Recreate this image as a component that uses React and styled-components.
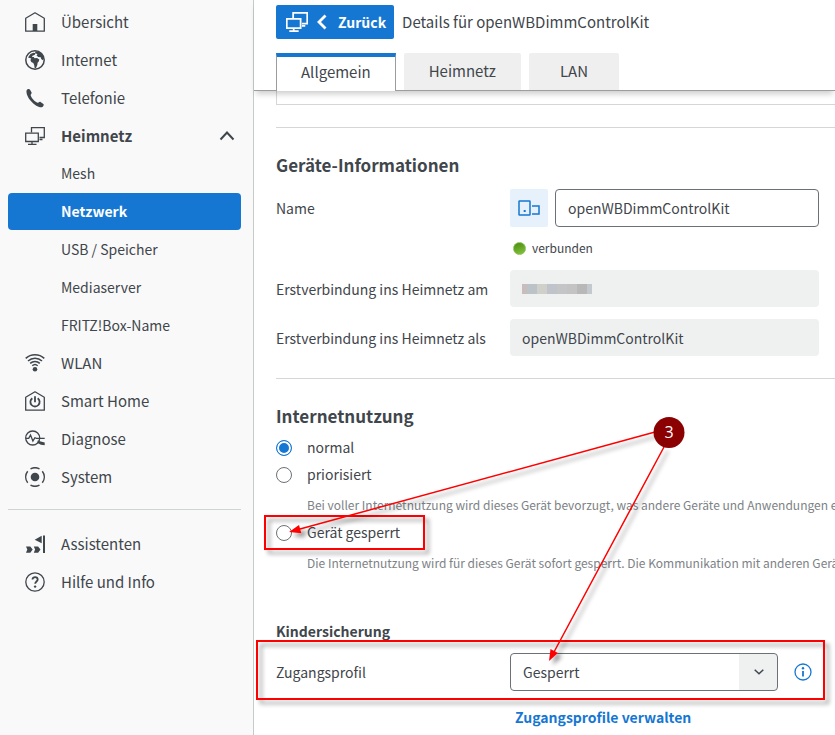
import React, { useState } from 'react';
import styled, { createGlobalStyle } from 'styled-components';

const BLUE = '#1677d2';
const TEXT = '#3f464c';

const GlobalStyle = createGlobalStyle`
    * {
        box-sizing: border-box;
    }

    body {
        margin: 0;
        background: #fff;
        color: ${TEXT};
        font-family: 'Noto Sans CJK SC', 'Noto Sans', sans-serif;
        font-size: 14px;
        line-height: 20px;
    }

    button, input, select {
        font: inherit;
        color: inherit;
    }
`;

const Page = styled.div`
    position: relative;
    display: flex;
    min-height: 100vh;
    overflow: hidden;
`;

// Sidebar

const Sidebar = styled.nav`
    flex: 0 0 254px;
    padding: 3px 12px 0 8px;
    background: #f9f9f9;
    border-right: 1px solid #c8caca;
`;

const MenuList = styled.ul`
    list-style: none;
    margin: 0;
    padding: 0;
`;

const SubList = styled(MenuList)`
    display: flex;
    flex-direction: column;
    gap: 1px;
`;

const MenuLink = styled.a`
    display: flex;
    align-items: center;
    gap: 16px;
    height: 38px;
    padding: 0 6px 0 17px;
    color: ${TEXT};
    font-size: 15px;
    font-weight: ${(props) => (props.$open ? 'bold' : 'normal')};
    text-decoration: none;
`;

const MenuText = styled.span`
    flex: 1;
`;

const SubLink = styled.a`
    display: flex;
    align-items: center;
    height: 37px;
    padding: 0 0 2px 53px;
    border-radius: 4px;
    background: ${(props) => (props.$active ? BLUE : 'transparent')};
    color: ${(props) => (props.$active ? '#fff' : TEXT)};
    font-weight: ${(props) => (props.$active ? 'bold' : 'normal')};
    text-decoration: none;
`;

const MenuDivider = styled.hr`
    height: 1px;
    margin: 13px 0 15px;
    border: 0;
    background: #d0d3d3;
`;

// Header

const Main = styled.main`
    flex: 1;
    min-width: 0;
`;

const Header = styled.header`
    position: relative;
    padding: 5px 0 0 22px;
    border-bottom: 1px solid #9b9e9c;
    box-shadow: 0 5px 6px -2px rgba(0, 0, 0, 0.2);
`;

const TitleRow = styled.div`
    display: flex;
    align-items: center;
    gap: 8px;
`;

const BackButton = styled.button`
    display: flex;
    align-items: center;
    gap: 8px;
    height: 34px;
    padding: 0 8px 0 10px;
    border: 0;
    border-radius: 2px;
    background: ${BLUE};
    color: #fff;
    font-size: 14px;
    font-weight: bold;
`;

const Title = styled.h1`
    margin: 0;
    font-size: 15px;
    font-weight: normal;
`;

const Tabs = styled.div`
    display: flex;
    gap: 8px;
    margin-top: 14px;
`;

const Tab = styled.button`
    min-width: 90px;
    height: ${(props) => (props.$active ? '38px' : '37px')};
    margin-bottom: ${(props) => (props.$active ? '-1px' : '0')};
    padding: ${(props) => (props.$active ? '0 24px 5px' : '0 25px 1px')};
    border: ${(props) => (props.$active ? '1px solid #9b9e9c' : '0')};
    border-top: ${(props) => (props.$active ? `4px solid ${BLUE}` : '0')};
    border-bottom: 0;
    border-radius: ${(props) => (props.$active ? '0' : '2px 2px 0 0')};
    background: ${(props) => (props.$active ? '#fff' : '#efefef')};
    font-size: 15px;
`;

// Content

const Content = styled.div`
    padding-left: 22px;
`;

const BoxEnd = styled.div`
    height: 14px;
    border: 1px solid #d4d7d6;
    border-width: 0 0 1px 1px;
`;

const Section = styled.section`
    margin-top: 22px;
    padding-top: 25px;
    border-top: 1px solid #d4d7d6;
`;

const SectionTitle = styled.h2`
    margin: 0;
    font-size: 17px;
    font-weight: bold;
    line-height: 24px;
`;

const Row = styled.div`
    display: grid;
    grid-template-columns: 234px minmax(0, 309px);
    align-items: center;
    margin-top: 12px;
`;

const NameField = styled.div`
    display: flex;
    gap: 7px;
`;

const DeviceIcon = styled.div`
    display: flex;
    align-items: center;
    justify-content: center;
    flex: 0 0 38px;
    height: 38px;
    border-radius: 2px;
    background: #e6f1fb;
`;

const TextInput = styled.input`
    width: 100%;
    min-width: 0;
    height: ${(props) => (props.readOnly ? '37px' : '38px')};
    padding: 0 12px;
    border: ${(props) => (props.readOnly ? '0' : '1px solid #6b7176')};
    border-radius: 4px;
    background: ${(props) => (props.readOnly ? '#eff1f1' : '#fff')};
    outline: 0;
`;

const HiddenValue = styled.div`
    display: flex;
    align-items: center;
    height: 37px;
    padding: 0 12px;
    border-radius: 4px;
    background: #eff1f1;
`;

const Block = styled.span`
    width: ${(props) => (props.$half ? '5px' : '10px')};
    height: 10px;
    background: ${(props) => props.$color};
`;

const Status = styled.div`
    display: flex;
    align-items: center;
    gap: 6px;
    margin: 11px 0 0 237px;
    font-size: 12px;
`;

const Led = styled.span`
    width: 13px;
    height: 13px;
    border: 1px solid #8cbf55;
    border-radius: 50%;
    background: linear-gradient(160deg, #4a8a12, #85c63c);
`;

const RadioGroup = styled.div`
    margin-top: 5px;
`;

const RadioRow = styled.label`
    display: flex;
    align-items: center;
    gap: 15px;
    height: 27px;
`;

const Radio = styled.input`
    appearance: none;
    width: 16px;
    height: 16px;
    margin: 2px 0 0;
    border: 1px solid #6b7176;
    border-radius: 50%;
    background: #fff;

    &:checked {
        border-color: ${BLUE};
        background: ${BLUE};
        box-shadow: inset 0 0 0 2px #fff;
    }
`;

const Hint = styled.p`
    margin: 8px 0 3px 31px;
    color: #7d8286;
    font-size: 12px;
    white-space: nowrap;
`;

const SubTitle = styled.h3`
    margin: 48px 0 0;
    font-size: 14px;
    font-weight: bold;
`;

const ProfileField = styled.div`
    display: flex;
    align-items: center;
    gap: 16px;
`;

const SelectBox = styled.div`
    position: relative;
    flex: 0 1 268px;

    svg {
        position: absolute;
        top: 14px;
        right: 14px;
        pointer-events: none;
    }
`;

const Select = styled.select`
    appearance: none;
    width: 100%;
    height: 38px;
    padding: 0 50px 0 12px;
    border: 1px solid #6b7176;
    border-radius: 4px;
    background: linear-gradient(#eff1f1, #eff1f1) right / 38px 100% no-repeat #fff;
`;

const InfoButton = styled.button`
    display: flex;
    padding: 0;
    border: 0;
    background: none;
`;

const ManageLink = styled.a`
    display: inline-block;
    margin: 16px 0 6px 239px;
    color: ${BLUE};
    font-weight: bold;
    text-decoration: none;
`;

const Callouts = styled.svg`
    position: absolute;
    top: 0;
    left: 0;
    pointer-events: none;
`;

// Icons

const Icon = ({ children, size = 20, weight = 1.3 }) => (
    <svg width={size} height={size} viewBox="0 0 20 20" fill="none" stroke="currentColor" strokeWidth={weight} aria-hidden="true">
        {children}
    </svg>
);

const HomeIcon = () => (
    <Icon>
        <path d="M.7 19.2V6.2L10 .8l9.3 5.4v13z" strokeLinejoin="round" />
        <path d="M7.700 19v-7h4.600v7z" fill="currentColor" stroke="none" />
    </Icon>
);

const GlobeIcon = () => (
    <Icon weight={1.5}>
        <circle cx="10" cy="10" r="9.2" />
        <path d="M3 7.600 5.500 4l3-1.300 2.300.6-1.300 1.700-2 .7-.5 1.300 1.800.1.700 1.200 2.500-.3 2.300 1.500-.4 1.800-1.300 1.500-.3 2.300-1.300 3-1.300.3-.5-3.500-.9-2-2-.9-.9-2.100.9-1.400-1.700-.5z" fill="currentColor" stroke="none" />
        <path d="M10.500 1.300c4.500 0 8 3.500 8.500 7.300l-1.200 1.600-1.600-1.200-.5-1.700-2.400-.3-1.800-1.400 1-1.300-2.400-1.300z" fill="currentColor" stroke="none" />
    </Icon>
);

const PhoneIcon = () => (
    <Icon>
        <path d="M1.600 2.200C2.400 1 4 .5 4.900 1.500l1.700 3c.4.8-.8 1.800-1 2.500.5 2.700 4.300 6.900 7 7.800.8.2 1.600-1.400 2.600-1l3.200 2.300c1 .9-.2 2.900-1.600 3.100C10 19.700.2 8.600 1.600 2.200z" fill="currentColor" stroke="none" />
    </Icon>
);

const NetworkIcon = ({ size, weight }) => (
    <Icon size={size} weight={weight}>
        <path d="M6.500 6.500V1.700h12.800v9.800h-4.800M14.500 13.500h3" />
        <path d="M.7 7.200h12.600v8.300H.7zM7 15.500v2.300M3 18.300h8.500" />
    </Icon>
);

const WifiIcon = () => (
    <Icon weight={1.5}>
        <path d="M.7 5.400c5.200-4.800 13.400-4.800 18.600 0M3 8c4-3.800 10-3.800 14 0M5.200 10.400c2.700-2.600 6.900-2.600 9.600 0M7.300 12.700c1.600-1.500 3.800-1.500 5.400 0" />
        <circle cx="10" cy="16.300" r="2.300" fill="currentColor" stroke="none" />
    </Icon>
);

const SmartHomeIcon = () => (
    <Icon>
        <path d="M.7 19.2V6.200L10 .8l9.300 5.400v13z" strokeLinejoin="round" />
        <path d="M10 5.300v6M7.300 7.200a4.600 4.600 0 1 0 5.400 0" strokeWidth="1.800" />
    </Icon>
);

const DiagnoseIcon = () => (
    <Icon>
        <circle cx="7.700" cy="9" r="7" />
        <path d="M.7 9.300h3l1.800-3.200 2.400 6 2-3.400 1.500.6h8.300" />
        <path d="m12.700 11.400 2.200.8 4.800 1.400v2.600l-3.700-.5-3.500-1.700z" fill="currentColor" stroke="none" />
    </Icon>
);

const SystemIcon = () => (
    <Icon weight={1.5}>
        <circle cx="10" cy="10" r="4.300" fill="currentColor" stroke="none" />
        <path d="M5.500 1.900a9.400 9.400 0 0 1 9 0M5.500 18.100a9.400 9.400 0 0 0 9 0M2.700 4.300a9.300 9.300 0 0 0 0 11.400M17.300 4.300a9.300 9.300 0 0 1 0 11.400" />
    </Icon>
);

const AssistIcon = () => (
    <Icon>
        <path d="M1 12.600h4.300l2.400 3-2.400 3.200H1l1.300-3.200zM8.800 12.600h4.300l2.400 3-2.400 3.200H8.800l1.300-3.200z" fill="currentColor" stroke="none" />
        <path d="m9.700 5.700 7-3.900v7.500z" fill="currentColor" stroke="none" />
        <path d="M19 1.500V19" strokeWidth="2" />
    </Icon>
);

const HelpIcon = () => (
    <Icon>
        <circle cx="10" cy="10" r="9.200" />
        <path d="M7.500 7.600c0-3.300 5.200-3.200 5.200 0 0 1.900-2.500 2-2.500 4.200" strokeWidth="1.800" />
        <circle cx="10.100" cy="14.600" r="1.200" fill="currentColor" stroke="none" />
    </Icon>
);

const MENU = [
    { label: 'Übersicht', icon: HomeIcon },
    { label: 'Internet', icon: GlobeIcon },
    { label: 'Telefonie', icon: PhoneIcon },
    {
        label: 'Heimnetz',
        icon: NetworkIcon,
        children: ['Mesh', 'Netzwerk', 'USB / Speicher', 'Mediaserver', 'FRITZ!Box-Name'],
    },
    { label: 'WLAN', icon: WifiIcon },
    { label: 'Smart Home', icon: SmartHomeIcon },
    { label: 'Diagnose', icon: DiagnoseIcon },
    { label: 'System', icon: SystemIcon },
];

const HELP_MENU = [
    { label: 'Assistenten', icon: AssistIcon },
    { label: 'Hilfe und Info', icon: HelpIcon },
];

const TABS = ['Allgemein', 'Heimnetz', 'LAN'];

const BLOCKS = ['#c8bcbc', '#bcc3c8', '#cfd0c9', '#c0c3ca', '#c4c5c6', '#c3c3c3', '#b8b8b8', '#c4c9cd'];

const MenuItem = ({ item }) => (
    <li>
        <MenuLink href="#" $open={!!item.children}>
            <item.icon />
            <MenuText>{item.label}</MenuText>
            {item.children && (
                <svg width="16" height="10" viewBox="0 0 16 10" fill="none" stroke="currentColor" strokeWidth="2">
                    <path d="m1.500 8.500 6.500-7 6.500 7" />
                </svg>
            )}
        </MenuLink>
        {item.children && (
            <SubList>
                {item.children.map((name) => (
                    <li key={name}>
                        <SubLink href="#" $active={name === 'Netzwerk'}>{name}</SubLink>
                    </li>
                ))}
            </SubList>
        )}
    </li>
);

// Red frames and arrows of step 3
const StepCallouts = () => (
    <Callouts width="835" height="735" viewBox="0 0 835 735">
        <defs>
            <filter id="shadow" x="-10%" y="-10%" width="120%" height="125%">
                <feDropShadow dx="4" dy="4" stdDeviation="2" floodColor="#000" floodOpacity="0.4" />
            </filter>
        </defs>
        <g filter="url(#shadow)" fill="none" stroke="#f00" strokeWidth="2">
            <rect x="265" y="516" width="159" height="33" />
            <rect x="257" y="641" width="567" height="58" />
        </g>
        <g filter="url(#shadow)" stroke="#f00" strokeWidth="1.500" fill="#f00">
            <path d="M655 432 300 529M664 447 554 652" />
            <path d="m289 532 10-7 2.400 8.200zM549 661l1.500-12 7.400 4z" stroke="none" />
        </g>
        <circle cx="669" cy="432.500" r="15.500" fill="#8b0000" />
        <text x="669" y="438" fill="#fff" fontFamily="'Open Sans', sans-serif" fontSize="16" textAnchor="middle">3</text>
    </Callouts>
);

const App = () => {
    const [tab, setTab] = useState('Allgemein');
    const [usage, setUsage] = useState('normal');
    const [name, setName] = useState('openWBDimmControlKit');

    const handleUsage = (e) => {
        setUsage(e.target.value);
    };

    return (
        <Page>
            <GlobalStyle />
            <Sidebar>
                <MenuList>
                    {MENU.map((item) => <MenuItem key={item.label} item={item} />)}
                </MenuList>
                <MenuDivider />
                <MenuList>
                    {HELP_MENU.map((item) => <MenuItem key={item.label} item={item} />)}
                </MenuList>
            </Sidebar>
            <Main>
                <Header>
                    <TitleRow>
                        <BackButton type="button">
                            <NetworkIcon size={22} weight={1.6} />
                            <svg width="14" height="16" viewBox="0 0 14 16" fill="none" stroke="currentColor" strokeWidth="2.800">
                                <path d="M9.500 1.500 3 8l6.500 6.500" />
                            </svg>
                            Zurück
                        </BackButton>
                        <Title>Details für openWBDimmControlKit</Title>
                    </TitleRow>
                    <Tabs role="tablist">
                        {TABS.map((label) => (
                            <Tab
                                key={label}
                                type="button"
                                role="tab"
                                aria-selected={tab === label}
                                $active={tab === label}
                                onClick={() => setTab(label)}
                            >
                                {label}
                            </Tab>
                        ))}
                    </Tabs>
                </Header>
                <Content>
                    <BoxEnd />
                    <Section>
                        <SectionTitle>Geräte-Informationen</SectionTitle>
                        <Row>
                            <label htmlFor="name">Name</label>
                            <NameField>
                                <DeviceIcon>
                                    <svg width="22" height="16" viewBox="0 0 22 16" fill="none" stroke={BLUE} strokeWidth="1.500">
                                        <rect x="1" y="1" width="11" height="14" rx=".5" />
                                        <path d="M14 6h7v8h-7" />
                                        <path d="M5.700 10h2v2h-2z" fill={BLUE} stroke="none" />
                                    </svg>
                                </DeviceIcon>
                                <TextInput id="name" value={name} onChange={(e) => setName(e.target.value)} />
                            </NameField>
                        </Row>
                        <Status>
                            <Led />
                            verbunden
                        </Status>
                        <Row>
                            <span>Erstverbindung ins Heimnetz am</span>
                            <HiddenValue>
                                {BLOCKS.map((color, i) => (
                                    <Block key={color} $color={color} $half={i === 0 || i === BLOCKS.length - 1} />
                                ))}
                            </HiddenValue>
                        </Row>
                        <Row>
                            <label htmlFor="firstName">Erstverbindung ins Heimnetz als</label>
                            <TextInput id="firstName" value="openWBDimmControlKit" readOnly />
                        </Row>
                    </Section>
                    <Section>
                        <SectionTitle>Internetnutzung</SectionTitle>
                        <RadioGroup>
                            <RadioRow>
                                <Radio type="radio" name="usage" value="normal" checked={usage === 'normal'} onChange={handleUsage} />
                                normal
                            </RadioRow>
                            <RadioRow>
                                <Radio type="radio" name="usage" value="prio" checked={usage === 'prio'} onChange={handleUsage} />
                                priorisiert
                            </RadioRow>
                            <Hint>Bei voller Internetnutzung wird dieses Gerät bevorzugt, was andere Geräte und Anwendungen ein</Hint>
                            <RadioRow>
                                <Radio type="radio" name="usage" value="locked" checked={usage === 'locked'} onChange={handleUsage} />
                                Gerät gesperrt
                            </RadioRow>
                            <Hint>Die Internetnutzung wird für dieses Gerät sofort gesperrt. Die Kommunikation mit anderen Geräte</Hint>
                        </RadioGroup>
                        <SubTitle>Kindersicherung</SubTitle>
                        <Row>
                            <label htmlFor="profile">Zugangsprofil</label>
                            <ProfileField>
                                <SelectBox>
                                    <Select id="profile">
                                        <option>Gesperrt</option>
                                    </Select>
                                    <svg width="10" height="10" viewBox="0 0 10 10" fill="none" stroke="currentColor" strokeWidth="1.500">
                                        <path d="m.7 2.700 4.300 4 4.300-4" />
                                    </svg>
                                </SelectBox>
                                <InfoButton type="button" aria-label="Info">
                                    <svg width="18" height="18" viewBox="0 0 18 18" fill="none" stroke={BLUE} strokeWidth="1.300">
                                        <circle cx="9" cy="9" r="8" />
                                        <path d="M9 8v5.500" strokeWidth="1.800" />
                                        <circle cx="9" cy="5.300" r="1.200" fill={BLUE} stroke="none" />
                                    </svg>
                                </InfoButton>
                            </ProfileField>
                        </Row>
                        <ManageLink href="#">Zugangsprofile verwalten</ManageLink>
                    </Section>
                </Content>
            </Main>
            <StepCallouts />
        </Page>
    );
};

export default App;
